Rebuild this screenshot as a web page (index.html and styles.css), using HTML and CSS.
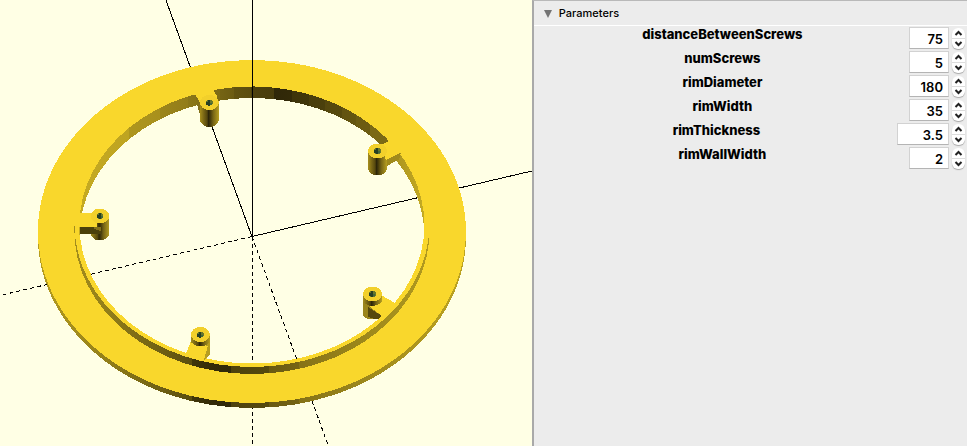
FILE: index.html
```html
<!DOCTYPE html>
<html lang="en">
<head>
<meta charset="utf-8">
<title>Parameters</title>
<link rel="stylesheet" href="styles.css">
</head>
<body>
<main class="workspace">
  <section class="viewport" aria-label="3D view">
    <svg class="scene" viewBox="0 0 532 446" preserveAspectRatio="xMidYMid slice" shape-rendering="crispEdges" role="img" aria-label="Rim with five screw posts">
      <defs>
        <linearGradient id="inner" gradientUnits="userSpaceOnUse" x1="80" y1="0" x2="430" y2="0">
          <stop offset="0" stop-color="#c5aa22"/><stop offset=".14" stop-color="#bea421"/>
          <stop offset=".14" stop-color="#ae961e"/><stop offset=".23" stop-color="#a8901c"/>
          <stop offset=".23" stop-color="#9c861b"/><stop offset=".31" stop-color="#927c19"/>
          <stop offset=".31" stop-color="#8b7718"/><stop offset=".40" stop-color="#7d6b15"/>
          <stop offset=".40" stop-color="#756414"/><stop offset=".44" stop-color="#6c5c12"/>
          <stop offset=".44" stop-color="#625310"/><stop offset=".49" stop-color="#5b4d0f"/>
          <stop offset=".49" stop-color="#4d410d"/><stop offset=".555" stop-color="#493d0c"/>
          <stop offset=".555" stop-color="#2f2708"/><stop offset=".605" stop-color="#332a08"/>
          <stop offset=".605" stop-color="#3e340a"/><stop offset=".655" stop-color="#40360a"/>
          <stop offset=".655" stop-color="#493e0c"/><stop offset=".70" stop-color="#4b400c"/>
          <stop offset=".70" stop-color="#55480e"/><stop offset=".75" stop-color="#574a0e"/>
          <stop offset=".75" stop-color="#625310"/><stop offset=".79" stop-color="#645510"/>
          <stop offset=".79" stop-color="#6c5c12"/><stop offset=".83" stop-color="#6c5c12"/>
          <stop offset=".83" stop-color="#7b6915"/><stop offset=".88" stop-color="#7b6915"/>
          <stop offset=".88" stop-color="#a58e1d"/><stop offset="1" stop-color="#cab024"/>
        </linearGradient>
        <linearGradient id="outer" gradientUnits="userSpaceOnUse" x1="38" y1="0" x2="466" y2="0">
          <stop offset="0" stop-color="#b79e20"/><stop offset=".16" stop-color="#927e19"/>
          <stop offset=".28" stop-color="#716114"/><stop offset=".36" stop-color="#5a4d0f"/>
          <stop offset=".36" stop-color="#40360a"/><stop offset=".41" stop-color="#332a08"/>
          <stop offset=".45" stop-color="#30290a"/><stop offset=".45" stop-color="#4d410d"/>
          <stop offset=".54" stop-color="#564a0e"/><stop offset=".54" stop-color="#6a5a12"/>
          <stop offset=".61" stop-color="#756414"/><stop offset=".61" stop-color="#857217"/>
          <stop offset=".75" stop-color="#9b861b"/><stop offset="1" stop-color="#bda421"/>
        </linearGradient>
        <linearGradient id="post">
          <stop offset="0" stop-color="#a8901d"/><stop offset=".2" stop-color="#7a6715"/>
          <stop offset=".38" stop-color="#55470e"/><stop offset=".45" stop-color="#2d2508"/>
          <stop offset=".53" stop-color="#41370b"/><stop offset=".7" stop-color="#776515"/>
          <stop offset="1" stop-color="#b69e20"/>
        </linearGradient>
        <g id="cap">
          <ellipse rx="9.5" ry="7.5" fill="#f2d02b"/>
          <ellipse rx="3.5" ry="3" fill="#68772b"/>
          <path d="M-3-1h2v-2h2v6h-2v-1h-2z" fill="#263e24"/>
          <path d="M1 0h2v2h-2z" fill="#42683a"/>
        </g>
        <path id="barrel" d="M-9.500 0V18Q-7 24.500 0 24.500T9.500 18V0z" fill="url(#post)"/>
        <path id="up" d="M3.500 7l3-3l3 3"/>
        <path id="down" d="M3.500 3l3 3l3-3"/>
      </defs>

      <g class="axes">
        <path d="M166 0L252 236.500L532 171"/>
        <path class="dashed" d="M252 236.500L0 295.500M252.500 237V446M252 236.500L328.500 446"/>
      </g>

      <!-- flange: side wall, then top face -->
      <path fill="url(#outer)" fill-rule="evenodd" d="M38 236.500a214 171.500 0 0 1 428 0a214 171.500 0 0 1-428 0zM79.500 225a172.500 138.500 0 0 0 345 0a172.500 138.500 0 0 0-345 0z"/>
      <path fill="#f9d72c" fill-rule="evenodd" d="M38 231.500a214 171.500 0 0 1 428 0a214 171.500 0 0 1-428 0zM79.500 225a172.500 138.500 0 0 0 345 0a172.500 138.500 0 0 0-345 0z"/>
      <!-- bore -->
      <path fill="url(#inner)" fill-rule="evenodd" d="M79.500 225a172.500 138.500 0 0 1 345 0v11.500a172.500 138.500 0 0 0-345 0z"/>
      <!-- outside of the raised lip -->
      <path fill="url(#outer)" d="M74.500 224a177.500 143 0 0 0 355 0v7a177.500 143 0 0 1-355 0z"/>

      <!-- top post -->
      <path fill="#83701a" d="M195 94l8 14v14l-4-10z"/>
      <use href="#barrel" x="209.500" y="102.500"/>
      <path fill="#f9d72c" d="M194 88l1 6l6 10h17l-1-8l-4-7z"/>
      <use href="#cap" x="209.500" y="102.500"/>

      <!-- right post -->
      <path fill="#a08a1c" d="M385 160l16-8l-2 8q-8 2-13 8z"/>
      <use href="#barrel" x="377.500" y="151"/>
      <path fill="#f9d72c" d="M380 144q6 1 11-6l12 14l-3 1l-14 7z"/>
      <use href="#cap" x="377.500" y="151"/>

      <!-- left post -->
      <use href="#barrel" x="100" y="216"/>
      <path fill="#4b400c" d="M80 227h22v7H80z"/>
      <path fill="#83701a" d="M94 226l7 1v4l-7-2z"/>
      <path fill="#f9d72c" d="M79 213h18v14H79z"/>
      <use href="#cap" x="100" y="216"/>

      <!-- lower left post -->
      <path fill="#b69e20" d="M202 343l8-4v16l-6 5z"/>
      <path fill="#f9d72c" d="M191 341l-5 13l18 6l4-14z"/>
      <path fill="url(#post)" d="M191 335v7q9 9 19 0v-7z"/>
      <use href="#cap" x="200.500" y="334.500"/>

      <!-- lower right post -->
      <path fill="#9a851b" d="M363 294v22q5 4 10 3l8-2v-6l-12-7z"/>
      <path fill="#55480e" d="M368 307l14 9l-3 3q-6 0-11-2z"/>
      <path fill="#f9d72c" d="M381 295l14 8l-7 10l-6 3l-13-10z"/>
      <path fill="url(#post)" d="M363 295v7q9 8 19 0v-7z"/>
      <use href="#cap" x="372.500" y="294"/>

      <path class="axes" d="M252.500 0V237"/>
    </svg>
  </section>

  <section class="panel">
    <header class="panel-header">
      <svg class="disclosure" viewBox="0 0 8 8" aria-hidden="true"><path d="M0 0h8L4 8z"/></svg>
      <h1 class="title">Parameters</h1>
    </header>
    <form class="parameters">
      <div class="row">
        <label class="name" for="distance">distanceBetweenScrews</label>
        <input class="value" id="distance" type="number" value="75">
        <div class="stepper"><button class="step" type="button" aria-label="Increase"><svg viewBox="0 0 13 10"><use href="#up"/></svg></button><button class="step" type="button" aria-label="Decrease"><svg viewBox="0 0 13 10"><use href="#down"/></svg></button></div>
      </div>
      <div class="row">
        <label class="name" for="screws">numScrews</label>
        <input class="value" id="screws" type="number" value="5">
        <div class="stepper"><button class="step" type="button" aria-label="Increase"><svg viewBox="0 0 13 10"><use href="#up"/></svg></button><button class="step" type="button" aria-label="Decrease"><svg viewBox="0 0 13 10"><use href="#down"/></svg></button></div>
      </div>
      <div class="row">
        <label class="name" for="diameter">rimDiameter</label>
        <input class="value" id="diameter" type="number" value="180">
        <div class="stepper"><button class="step" type="button" aria-label="Increase"><svg viewBox="0 0 13 10"><use href="#up"/></svg></button><button class="step" type="button" aria-label="Decrease"><svg viewBox="0 0 13 10"><use href="#down"/></svg></button></div>
      </div>
      <div class="row">
        <label class="name" for="width">rimWidth</label>
        <input class="value" id="width" type="number" value="35">
        <div class="stepper"><button class="step" type="button" aria-label="Increase"><svg viewBox="0 0 13 10"><use href="#up"/></svg></button><button class="step" type="button" aria-label="Decrease"><svg viewBox="0 0 13 10"><use href="#down"/></svg></button></div>
      </div>
      <div class="row">
        <label class="name" for="thickness">rimThickness</label>
        <input class="value decimal" id="thickness" type="number" step="0.1" value="3.5">
        <div class="stepper"><button class="step" type="button" aria-label="Increase"><svg viewBox="0 0 13 10"><use href="#up"/></svg></button><button class="step" type="button" aria-label="Decrease"><svg viewBox="0 0 13 10"><use href="#down"/></svg></button></div>
      </div>
      <div class="row">
        <label class="name" for="wall">rimWallWidth</label>
        <input class="value" id="wall" type="number" value="2">
        <div class="stepper"><button class="step" type="button" aria-label="Increase"><svg viewBox="0 0 13 10"><use href="#up"/></svg></button><button class="step" type="button" aria-label="Decrease"><svg viewBox="0 0 13 10"><use href="#down"/></svg></button></div>
      </div>
    </form>
  </section>
</main>
</body>
</html>
```
FILE: styles.css
```css
* {
  box-sizing: border-box;
}

body {
  margin: 0;
  font-family: Inter, "Liberation Sans", sans-serif;
  color: #000;
}

.workspace {
  display: grid;
  grid-template-columns: 55fr 45fr;
  height: 100vh;
}

.viewport {
  min-width: 0;
  overflow: hidden;
  background: #ffffe5;
}

.scene {
  display: block;
  width: 100%;
  height: 100%;
}

.axes {
  fill: none;
  stroke: #000;
  stroke-width: 1;
}

.dashed {
  stroke-dasharray: 4 3;
}

.panel {
  border-top: 1px solid #b9b9b9;
  border-left: 2px solid #a9a9a9;
  background: #ececec;
}

.panel-header {
  display: flex;
  align-items: center;
  gap: 7px;
  height: 25px;
  padding-left: 10px;
  border-bottom: 1px solid #fff;
}

.disclosure {
  width: 8px;
  height: 8px;
  margin-top: 2px;
  fill: #747474;
}

.title {
  margin: 0;
  font-size: 11px;
  font-weight: 500;
}

.parameters {
  display: grid;
  gap: 2px;
  padding: 1px 2px;
}

.row {
  display: flex;
  height: 22px;
}

.name {
  flex: 1;
  font-size: 13px;
  font-weight: 800;
  line-height: 14px;
  text-align: center;
}

.value {
  width: 40px;
  height: 22px;
  margin: 0 3px 0 0;
  padding: 1px 5px 0 0;
  border: 1px solid #d2d2d2;
  border-bottom-color: #b4b4b4;
  background: #fff;
  color: #000;
  font-family: inherit;
  font-size: 13px;
  font-weight: 600;
  text-align: right;
  appearance: textfield;
}

.value::-webkit-inner-spin-button {
  display: none;
}

.decimal {
  width: 52px;
}

.stepper {
  display: flex;
  flex-direction: column;
  width: 13px;
  height: 21px;
  margin-top: 1px;
  overflow: hidden;
  border-radius: 6px;
  background: #fff;
  box-shadow: 0 1px 1px #aaa;
}

.step {
  flex: 1;
  min-height: 0;
  padding: 0;
  border: 0;
  background: none;
}

.step + .step {
  border-top: 1px solid #ddd;
}

.step svg {
  display: block;
  width: 13px;
  height: 10px;
  fill: none;
  stroke: #222;
  stroke-width: 2;
}
```
